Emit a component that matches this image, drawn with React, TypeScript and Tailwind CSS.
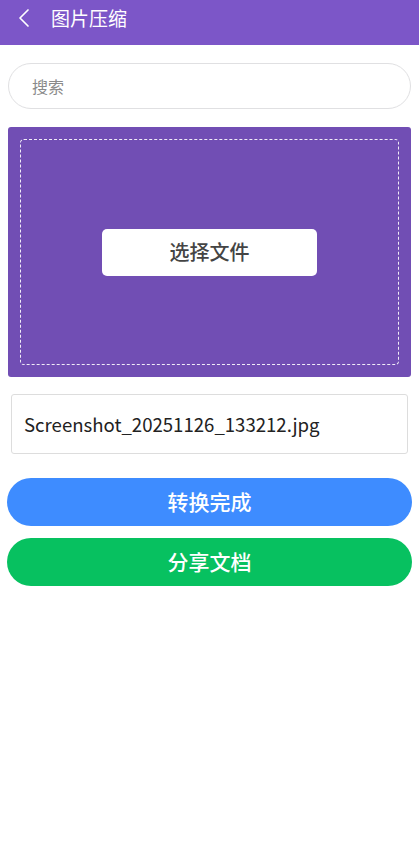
const font = { fontFamily: '"Noto Sans CJK SC", "Noto Sans", sans-serif' };

function BackIcon() {
  return (
    <svg width="14" height="20" viewBox="0 0 14 20" fill="none" className="ml-[17px]">
      <path d="M11 2 L3 10 L11 18" stroke="white" strokeWidth="1.7" strokeLinecap="round" strokeLinejoin="round" />
    </svg>
  );
}

export default function App() {
  return (
    <div className="w-[419px] min-h-[857px] bg-white" style={font}>
      <div className="h-[45px] bg-[#7c56c8] flex items-start pt-[8px]">
        <BackIcon />
        <span className="ml-[20px] text-[19px] text-white leading-[20px]">图片压缩</span>
      </div>

      <div className="px-2 pt-[18px]">
        <div className="h-[46px] rounded-full border border-[#e0e0e2] flex items-center pl-[23px] text-[16px] text-[#8a8a8a]">
          搜索
        </div>

        <div className="mt-[18px] h-[250px] bg-[#714eb4] rounded-[3px] p-3">
          <div className="h-full border border-dashed border-white/90 rounded-[4px] flex items-center justify-center">
            <div className="w-[215px] h-[47px] bg-white rounded-[5px] flex items-center justify-center text-[20px] font-medium text-[#444]">
              选择文件
            </div>
          </div>
        </div>

        <div className="mx-[3px] mt-[17px] h-[60px] border border-[#ddd] rounded-[3px] flex items-center pl-[12px] text-[18.6px] text-[#222]">
          Screenshot_20251126_133212.jpg
        </div>

        <div className="-mx-px mt-[24px] h-[48px] rounded-full bg-[#3e8cff] flex items-center justify-center text-[21px] font-medium text-white">
          转换完成
        </div>
        <div className="-mx-px mt-[12px] h-[48px] rounded-full bg-[#07c160] flex items-center justify-center text-[21px] font-medium text-white">
          分享文档
        </div>
      </div>
    </div>
  );
}
